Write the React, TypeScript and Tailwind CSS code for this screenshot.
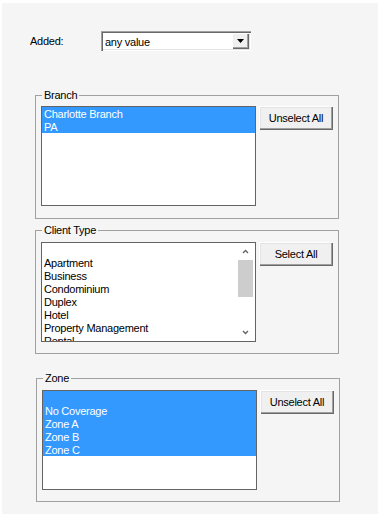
import React from "react";

const font = { fontFamily: '"Liberation Sans", Arial, sans-serif' };

function Chevron({ up }: { up?: boolean }) {
  return (
    <svg width="7" height="5" viewBox="0 0 7 5" className="block">
      <polyline
        points={up ? "1,4 3.5,1.5 6,4" : "1,1 3.5,3.5 6,1"}
        fill="none"
        stroke="#606060"
        strokeWidth="1.3"
      />
    </svg>
  );
}

function Btn({ label }: { label: string }) {
  return (
    <div className="w-[74px] h-[24px] flex items-center justify-center pt-[1px] bg-[#f0f0f0] shadow-[inset_1px_1px_0_#ffffff,inset_-1px_-1px_0_#696969,inset_-2px_-2px_0_#a0a0a0,inset_2px_2px_0_#e3e3e3] text-black">
      {label}
    </div>
  );
}

function Item({ text, sel }: { text: string; sel?: boolean }) {
  return (
    <div
      className={
        "h-[13px] leading-[15px] pl-[2px] whitespace-nowrap shrink-0 " +
        (sel ? "bg-[#3399ff] text-white" : "text-black")
      }
    >
      {text}
    </div>
  );
}

function Group({
  title,
  children,
  extra,
}: {
  title: string;
  children: React.ReactNode;
  extra: string;
}) {
  return (
    <div className={"relative border border-[#a0a0a0] w-[304px] h-[124px] pl-[5px] flex gap-[3px] " + extra}>
      <span className="absolute left-[6px] top-[-7px] px-[2px] bg-[#f5f5f5] leading-[13px] text-black">
        {title}
      </span>
      {children}
    </div>
  );
}

export default function App() {
  return (
    <div
      className="w-[380px] h-[514px] bg-white pt-[3px] pl-[2px] text-[11px] tracking-[-0.25px]"
      style={font}
    >
      <div className="w-[376px] h-[511px] bg-[#f5f5f5] pt-[28px] pl-[28px]">
        <div className="flex items-center h-[20px]">
          <div className="w-[71px] text-black pt-[1px]">Added:</div>
          <div className="w-[150px] h-[20px] bg-white p-[2px] flex shadow-[inset_1px_1px_0_#a0a0a0,inset_2px_2px_0_#696969,inset_-1px_-1px_0_#ffffff,inset_-2px_-2px_0_#e3e3e3]">
            <div className="flex-1 pl-[2px] leading-[16px] pt-[1px] text-black">any value</div>
            <div className="w-[17px] h-[16px] bg-[#f0f0f0] flex items-center justify-center shadow-[inset_1px_1px_0_#ffffff,inset_-1px_-1px_0_#696969,inset_-2px_-2px_0_#a0a0a0]">
              <svg width="7" height="4" viewBox="0 0 7 4" className="block -ml-[1px]">
                <polygon points="0,0 7,0 3.5,4" fill="#000" />
              </svg>
            </div>
          </div>
        </div>

        <Group title="Branch" extra="ml-[5px] mt-[44px] pt-[10px]">
          <div className="w-[215px] h-[100px] border border-[#646464] bg-white flex flex-col overflow-hidden">
            <Item text="Charlotte Branch" sel />
            <Item text="PA" sel />
          </div>
          <Btn label="Unselect All" />
        </Group>

        <Group title="Client Type" extra="ml-[5px] mt-[11px] pt-[11px]">
          <div className="w-[215px] h-[100px] border border-[#646464] bg-white flex overflow-hidden">
            <div className="flex-1 flex flex-col overflow-hidden">
              <Item text="" />
              <Item text="Apartment" />
              <Item text="Business" />
              <Item text="Condominium" />
              <Item text="Duplex" />
              <Item text="Hotel" />
              <Item text="Property Management" />
              <Item text="Rental" />
            </div>
            <div className="w-[17px] h-full flex flex-col">
              <div className="h-[17px] w-[15px] flex items-center justify-center">
                <Chevron up />
              </div>
              <div className="h-[37px] w-[15px] bg-[#cdcdcd]" />
              <div className="flex-1" />
              <div className="h-[17px] w-[15px] flex items-center justify-center">
                <Chevron />
              </div>
            </div>
          </div>
          <Btn label="Select All" />
        </Group>

        <Group title="Zone" extra="ml-[6px] mt-[24px] pt-[11px]">
          <div className="w-[215px] h-[100px] border border-[#646464] bg-white flex flex-col overflow-hidden">
            <Item text="" sel />
            <Item text="No Coverage" sel />
            <Item text="Zone A" sel />
            <Item text="Zone B" sel />
            <Item text="Zone C" sel />
          </div>
          <Btn label="Unselect All" />
        </Group>
      </div>
    </div>
  );
}
